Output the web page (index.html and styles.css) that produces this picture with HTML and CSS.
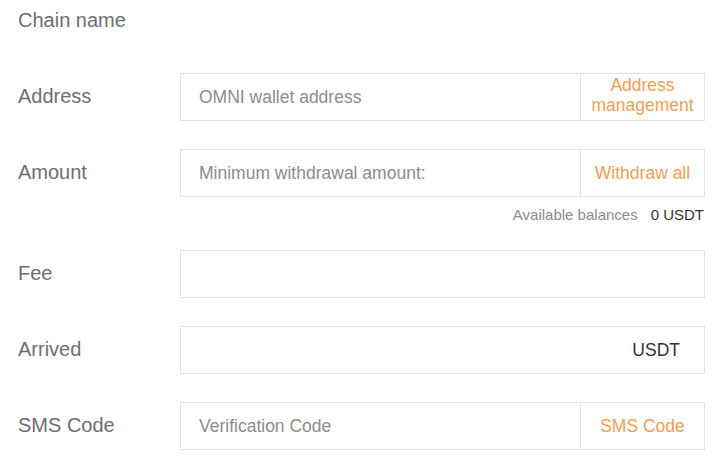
FILE: index.html
```html
<!DOCTYPE html>
<html lang="en">
<head>
<meta charset="utf-8">
<title>Withdraw</title>
<link rel="stylesheet" href="styles.css">
</head>
<body>
<form class="form">
  <div class="row row-chain">
    <label class="label">Chain name</label>
  </div>
  <div class="row">
    <label class="label">Address</label>
    <div class="field">
      <input class="input" type="text" placeholder="OMNI wallet address">
      <button class="action two-line" type="button">Address<br>management</button>
    </div>
  </div>
  <div class="row">
    <label class="label">Amount</label>
    <div class="field">
      <input class="input" type="text" placeholder="Minimum withdrawal amount:">
      <button class="action" type="button">Withdraw all</button>
    </div>
  </div>
  <div class="balance">
    <span class="balance-label">Available balances</span>
    <span class="balance-value">0 USDT</span>
  </div>
  <div class="row row-after-balance">
    <label class="label">Fee</label>
    <div class="field">
      <input class="input" type="text">
    </div>
  </div>
  <div class="row">
    <label class="label">Arrived</label>
    <div class="field">
      <input class="input" type="text">
      <span class="suffix">USDT</span>
    </div>
  </div>
  <div class="row">
    <label class="label">SMS Code</label>
    <div class="field">
      <input class="input" type="text" placeholder="Verification Code">
      <button class="action" type="button">SMS Code</button>
    </div>
  </div>
</form>
</body>
</html>
```

FILE: styles.css
```css
html, body {
  margin: 0;
  padding: 0;
  background: #ffffff;
}

body {
  font-family: "Liberation Sans", Arial, sans-serif;
  width: 721px;
  height: 461px;
  overflow: hidden;
}

.form {
  display: flex;
  flex-direction: column;
  gap: 28px;
  padding-left: 18px;
  width: 687px;
}

.row {
  display: flex;
  align-items: center;
  height: 48px;
}

.row-chain {
  height: 41px;
  margin-bottom: 4px;
}

.label {
  width: 162px;
  flex: none;
  font-size: 20px;
  color: #6e6e6e;
  margin-top: -1px;
}

.field {
  width: 525px;
  height: 48px;
  box-sizing: border-box;
  border: 1px solid #e2e2e2;
  display: flex;
  align-items: stretch;
}

.input {
  flex: 1;
  min-width: 0;
  border: none;
  outline: none;
  background: transparent;
  padding: 0 0 0 18px;
  margin: 0;
  font-family: "Liberation Sans", Arial, sans-serif;
  font-size: 17.5px;
  color: #333333;
}

.input::placeholder {
  color: #8c8c8c;
  opacity: 1;
}

.action {
  width: 124px;
  flex: none;
  border: none;
  border-left: 1px solid #e2e2e2;
  background: transparent;
  padding: 0;
  margin: 0;
  font-family: "Liberation Sans", Arial, sans-serif;
  font-size: 17.5px;
  color: #efa055;
  text-align: center;
  line-height: 20px;
  cursor: pointer;
}

.two-line {
  padding-bottom: 4px;
}

.suffix {
  display: flex;
  align-items: center;
  padding-right: 24px;
  font-size: 17.5px;
  color: #333333;
}

.balance {
  margin-top: -20px;
  width: 686px;
  display: flex;
  justify-content: flex-end;
  line-height: 20px;
  font-size: 15px;
}

.balance-label {
  color: #8c8c8c;
}

.balance-value {
  margin-left: 13px;
  color: #333333;
}

.row-after-balance {
  margin-top: -3px;
}
```
